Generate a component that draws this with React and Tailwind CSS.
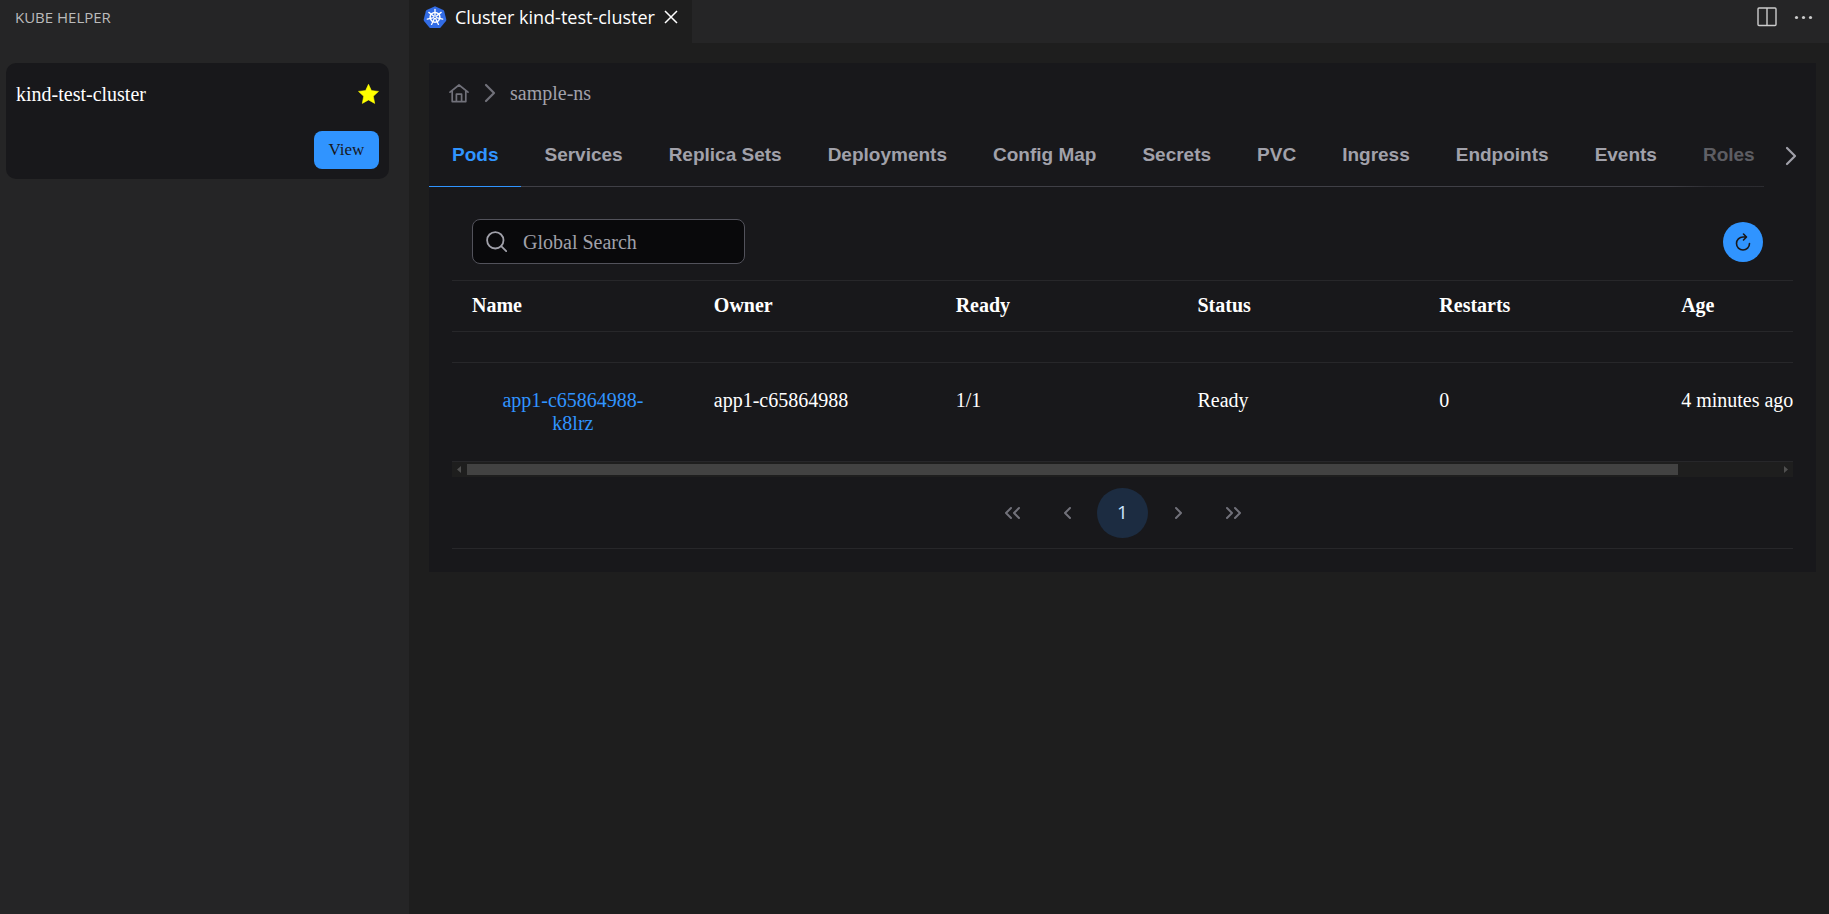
import { useState } from 'react';

const tabs = ['Pods', 'Services', 'Replica Sets', 'Deployments', 'Config Map', 'Secrets', 'PVC', 'Ingress', 'Endpoints', 'Events', 'Roles'];
const columns = ['Name', 'Owner', 'Ready', 'Status', 'Restarts', 'Age'];
const pods = [
    { name: 'app1-c65864988-k8lrz', owner: 'app1-c65864988', ready: '1/1', status: 'Ready', restarts: 0, age: '4 minutes ago' },
];

function KubeIcon() {
    const spokes = [0, 1, 2, 3, 4, 5, 6].map((i) => (i * 360) / 7);
    return (
        <svg viewBox="0 0 24 24" className="w-6 h-6 shrink-0">
            <path
                d="M12 1.2 20.3 5.1 Q21 5.5 21.2 6.2L23.3 14.6 Q23.4 15.4 23 16L17.6 22.4 Q17 23 16.3 23H7.7Q7 23 6.4 22.4L1 16Q.6 15.4.7 14.6L2.8 6.2Q3 5.5 3.7 5.1Z"
                fill="#326ce5"
            />
            <circle cx="12" cy="12.3" r="4.9" fill="none" stroke="#fff" strokeWidth="1.5" />
            {spokes.map((a) => (
                <path key={a} d="M12 11.2V4.4" stroke="#fff" strokeWidth="1.3" strokeLinecap="round" transform={`rotate(${a} 12 12.3)`} />
            ))}
            <circle cx="12" cy="12.3" r="0.8" fill="#326ce5" />
        </svg>
    );
}

function Chevron({ className }) {
    return (
        <svg viewBox="0 0 14 20" fill="none" stroke="currentColor" strokeWidth="2.2" strokeLinecap="round" strokeLinejoin="round" className={className}>
            <path d="M3 2l8 8-8 8" />
        </svg>
    );
}

function Sidebar() {
    return (
        <aside className="w-[409px] shrink-0 bg-[#252526] pl-1.5 pr-5">
            <h1 className="pl-[9px] pt-[5px] h-[63px] font-['Open_Sans','Noto_Sans',sans-serif] text-[15px] leading-6 text-[#bbbbbb]">KUBE HELPER</h1>
            <div className="bg-[#18181b] rounded-[10px] px-2.5 pt-[19px] pb-2.5">
                <div className="flex items-center justify-between text-white">
                    <span className="leading-6">kind-test-cluster</span>
                    <button aria-label="Favorite">
                        <svg viewBox="0 0 21 20" className="w-[21px] h-5" fill="#ffff00">
                            <path d="M10.5.3 13.4 6.6 20.5 7.4 15.3 12.2 16.7 19.4 10.5 15.9 4.3 19.4 5.7 12.2.5 7.4 7.6 6.6Z" stroke="#ffff00" strokeWidth=".6" strokeLinejoin="round" />
                        </svg>
                    </button>
                </div>
                <div className="flex justify-end mt-[25px]">
                    <button className="w-[65px] h-[38px] rounded-lg bg-[#3094ff] text-[17px] text-[#18181b]">View</button>
                </div>
            </div>
        </aside>
    );
}

function EditorTabs() {
    return (
        <header className="flex justify-between h-[43px] bg-[#252526] font-['Open_Sans','Noto_Sans',sans-serif]">
            <div className="flex items-start bg-[#1e1e1e] w-[283px] pl-3.5 pt-[5px] text-white">
                <KubeIcon />
                <span className="ml-2 text-[18px] leading-6 whitespace-nowrap">Cluster kind-test-cluster</span>
                <button aria-label="Close" className="ml-2 mt-1">
                    <svg viewBox="0 0 16 16" className="w-4 h-4" stroke="currentColor" strokeWidth="1.5">
                        <path d="M2 2l12 12M14 2 2 14" />
                    </svg>
                </button>
            </div>
            <div className="flex items-start gap-4 pt-[7px] pr-4 text-[#cccccc]">
                <button aria-label="Split editor">
                    <svg viewBox="0 0 20 20" className="w-5 h-5" fill="none" stroke="currentColor" strokeWidth="1.4">
                        <rect x="1" y="1" width="18" height="17.5" rx="1" />
                        <path d="M10 1v17.5" />
                    </svg>
                </button>
                <button aria-label="More actions">
                    <svg viewBox="0 0 20 20" className="w-5 h-5" fill="currentColor">
                        <circle cx="3.5" cy="10.5" r="1.6" />
                        <circle cx="10.5" cy="10.5" r="1.6" />
                        <circle cx="17.5" cy="10.5" r="1.6" />
                    </svg>
                </button>
            </div>
        </header>
    );
}

function Breadcrumb() {
    return (
        <nav className="flex items-center pl-5 pt-[18px] text-[#71717a]">
            <a href="#home" aria-label="Home">
                <svg viewBox="0 0 20 20" className="w-5 h-5" fill="none" stroke="currentColor" strokeWidth="1.7" strokeLinejoin="round" strokeLinecap="round">
                    <path d="M1 9.2 10 2l9 7.2M3.2 7.8v10.8h13.6V7.8M7.4 18.4v-7.2h5.2v7.2" />
                </svg>
            </a>
            <Chevron className="w-3.5 h-5 ml-3.5 mr-[13px]" />
            <a href="#sample-ns" className="leading-6 text-[#a1a1aa]">sample-ns</a>
        </nav>
    );
}

function ResourceTabs({ active, onSelect }) {
    return (
        <div className="flex mt-5">
            <div className="relative flex-1 min-w-0 overflow-hidden">
                <div role="tablist" className="flex border-b border-[#3f3f46]">
                    {tabs.map((tab) => (
                        <button
                            key={tab}
                            role="tab"
                            aria-selected={tab === active}
                            onClick={() => onSelect(tab)}
                            className={`shrink-0 px-[23px] h-[62px] -mb-px border-b font-["Liberation_Sans",Arial,sans-serif] font-bold text-[19px] whitespace-nowrap ${tab === active ? 'text-[#3094ff] border-[#3094ff]' : 'text-[#a1a1aa] border-transparent'}`}
                        >
                            {tab}
                        </button>
                    ))}
                </div>
                <div className="absolute right-0 inset-y-0 w-[93px] pointer-events-none bg-linear-to-r from-transparent to-[#18181b]/50 to-40%" />
            </div>
            <button aria-label="Next tabs" className="w-[52px] pl-0.5 flex justify-center items-center text-[#a1a1aa]">
                <Chevron className="w-3.5 h-5" />
            </button>
        </div>
    );
}

function PodTable() {
    return (
        <div className="overflow-hidden border-t border-[#27272a]">
            <table className="w-[1451px] table-fixed border-collapse text-left text-white leading-[23px]">
                <thead>
                    <tr className="border-b border-[#27272a]">
                        {columns.map((col) => (
                            <th key={col} className="h-[50px] px-5 font-bold">{col}</th>
                        ))}
                    </tr>
                    <tr className="border-b border-[#27272a]">
                        <td colSpan={6} className="h-[31px] p-0" />
                    </tr>
                </thead>
                <tbody>
                    {pods.map((pod) => (
                        <tr key={pod.name} className="border-b border-[#27272a] align-top">
                            <td className="h-[99px] px-5 pt-[26px] text-center">
                                <button className="w-full px-6 text-[#3094ff]">{pod.name}</button>
                            </td>
                            <td className="px-5 pt-[26px]">{pod.owner}</td>
                            <td className="px-5 pt-[26px]">{pod.ready}</td>
                            <td className="px-5 pt-[26px]">{pod.status}</td>
                            <td className="px-5 pt-[26px]">{pod.restarts}</td>
                            <td className="px-5 pt-[26px] whitespace-nowrap">{pod.age}</td>
                        </tr>
                    ))}
                </tbody>
            </table>
            {/* horizontal scrollbar */}
            <div className="flex items-center h-[15px] bg-[#1e1e1e] text-[#4f4f4f]">
                <svg viewBox="0 0 15 15" className="w-[15px] h-[15px]" fill="currentColor"><path d="M9 4v7L5 7.5Z" /></svg>
                <div className="flex-1">
                    <div className="w-[92.4%] h-[11px] bg-[#424242]" />
                </div>
                <svg viewBox="0 0 15 15" className="w-[15px] h-[15px]" fill="currentColor"><path d="M6 4v7l4-3.5Z" /></svg>
            </div>
        </div>
    );
}

function PageButton({ label, children }) {
    return (
        <button aria-label={label} className="w-[51px] h-[50px] rounded-full flex items-center justify-center text-[#71717a]">
            <svg viewBox="0 0 18 14" className="w-[18px] h-3.5" fill="none" stroke="currentColor" strokeWidth="2" strokeLinecap="round" strokeLinejoin="round">
                {children}
            </svg>
        </button>
    );
}

function Paginator() {
    return (
        <div className="flex justify-center gap-1 pt-[11px] pb-[10px] border-b border-[#27272a]">
            <PageButton label="First page"><path d="M7 2 2 7l5 5M15 2l-5 5 5 5" /></PageButton>
            <PageButton label="Previous page"><path d="M11 2 6 7l5 5" /></PageButton>
            <button aria-label="Page 1" className="w-[51px] h-[50px] rounded-full bg-[#1c2c41] text-[#cde4fe] font-['Open_Sans','Noto_Sans',sans-serif] text-[19px]">1</button>
            <PageButton label="Next page"><path d="M7 2l5 5-5 5" /></PageButton>
            <PageButton label="Last page"><path d="M3 2l5 5-5 5M11 2l5 5-5 5" /></PageButton>
        </div>
    );
}

export default function App() {
    const [active, setActive] = useState('Pods');
    const [query, setQuery] = useState('');

    return (
        <div className="flex min-h-screen bg-[#1e1e1e] font-['Liberation_Serif','Times_New_Roman',serif] text-[20px]">
            <Sidebar />
            <div className="flex-1 min-w-0">
                <EditorTabs />
                <main className="mt-5 ml-5 mr-[13px] bg-[#18181b]">
                    <Breadcrumb />
                    <ResourceTabs active={active} onSelect={setActive} />
                    <div className="px-[23px] pt-8 pb-[23px]">
                        <div className="flex items-center justify-between pl-5 pr-[30px] pb-4">
                            <label className="flex items-center w-[273px] h-[45px] rounded-lg border border-[#52525b] bg-[#09090b] pl-[13px]">
                                <svg viewBox="0 0 21 21" className="w-[21px] h-[21px] shrink-0 text-[#a1a1aa]" fill="none" stroke="currentColor" strokeWidth="1.8" strokeLinecap="round">
                                    <circle cx="9.3" cy="9.3" r="8.2" />
                                    <path d="m15.2 15.2 5 5" />
                                </svg>
                                <input
                                    type="text"
                                    aria-label="Global Search"
                                    placeholder="Global Search"
                                    value={query}
                                    onChange={(e) => setQuery(e.target.value)}
                                    className="flex-1 min-w-0 ml-4 bg-transparent text-white placeholder:text-[#a1a1aa] outline-none"
                                />
                            </label>
                            <button aria-label="Refresh" className="w-10 h-10 rounded-full bg-[#3094ff] text-[#18181b] flex items-center justify-center">
                                <svg viewBox="0 0 18 20" className="w-[18px] h-5" fill="none" stroke="currentColor" strokeWidth="1.6" strokeLinecap="round" strokeLinejoin="round">
                                    <path d="M15.5 11.5A6.5 6.5 0 1 1 9 5h3M9.5 2l3 3-3 3" />
                                </svg>
                            </button>
                        </div>
                        <PodTable />
                        <Paginator />
                    </div>
                </main>
            </div>
        </div>
    );
}
